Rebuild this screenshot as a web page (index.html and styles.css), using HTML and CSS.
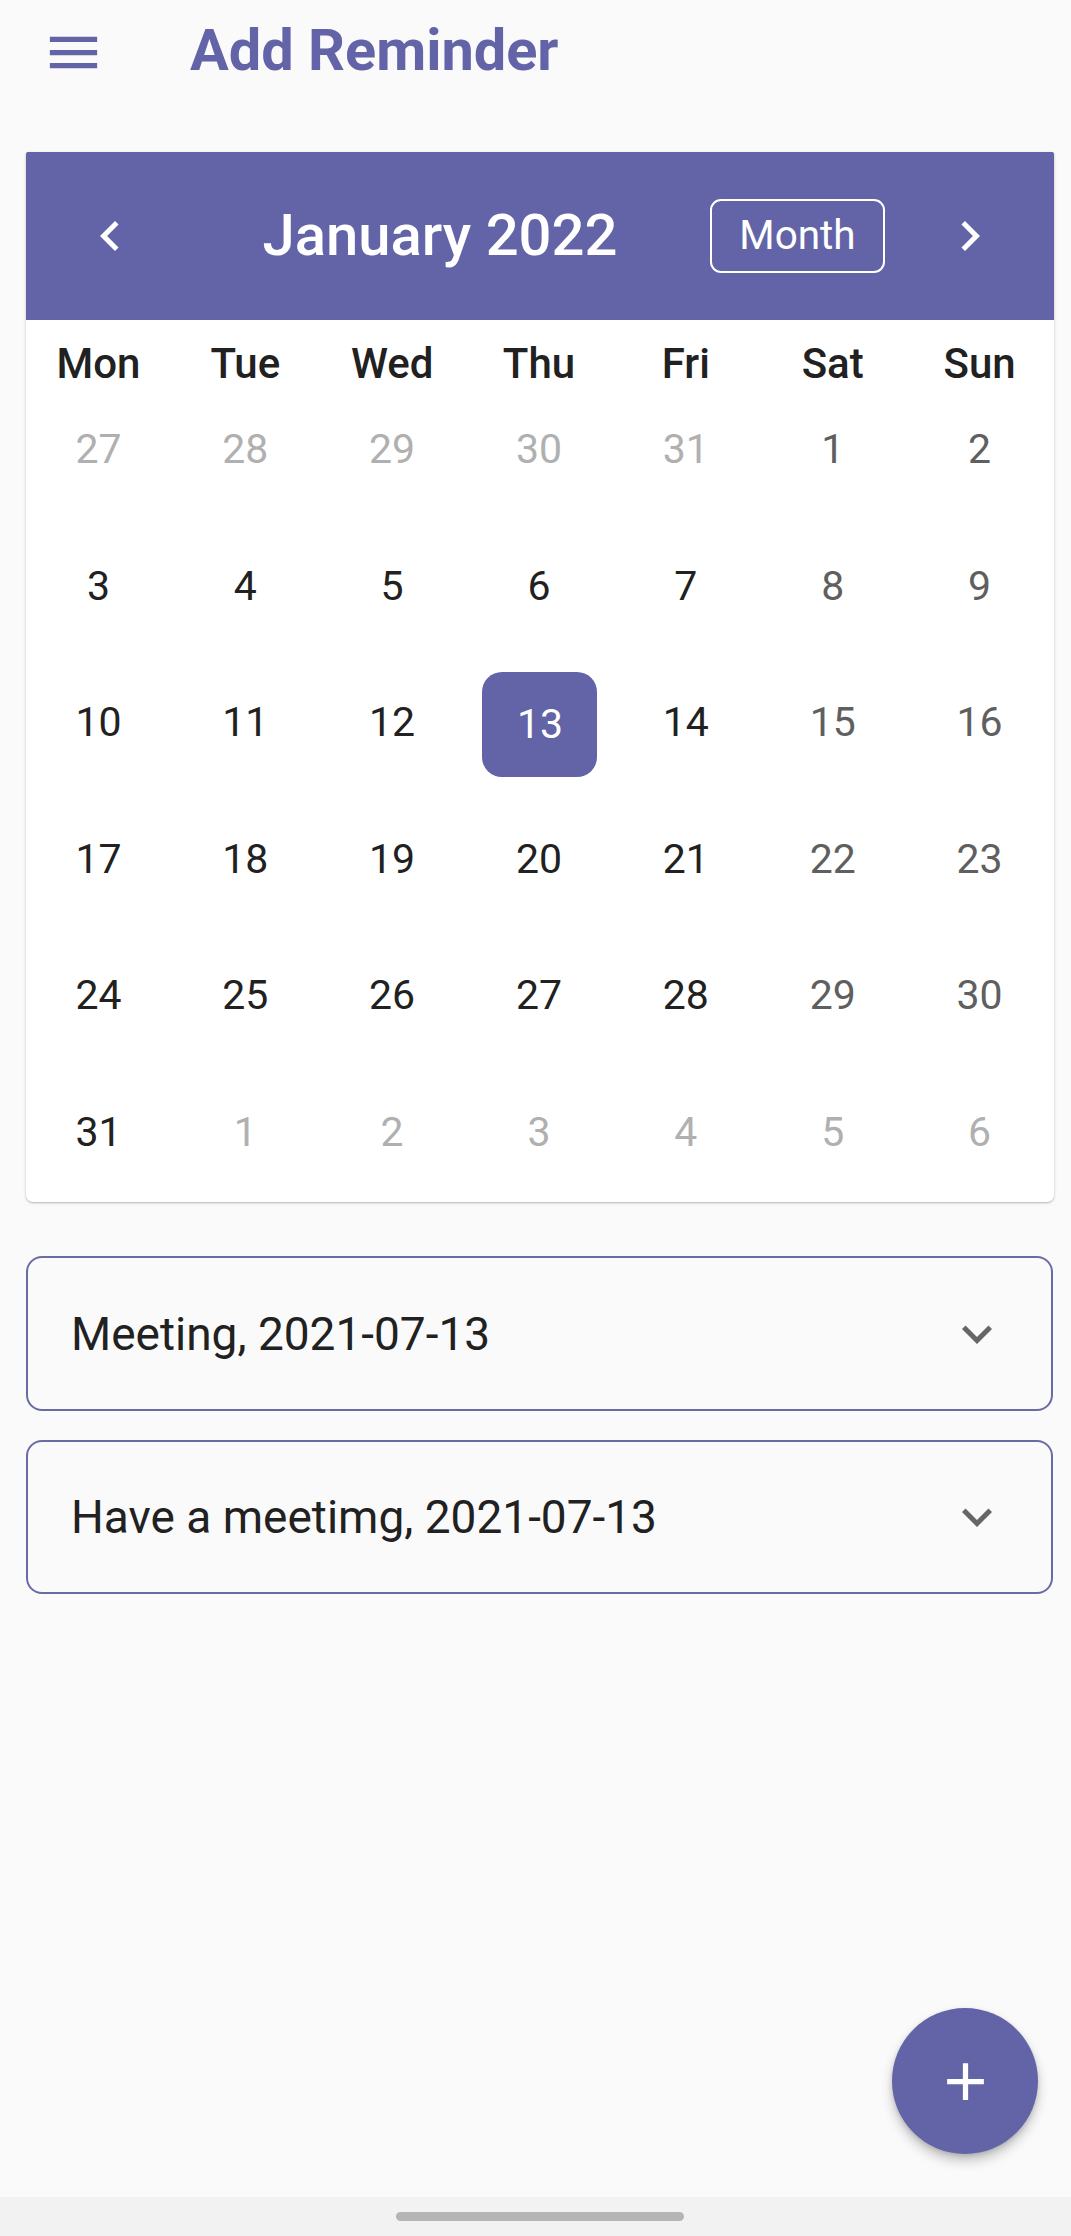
FILE: index.html
```html
<!DOCTYPE html>
<html lang="en">
<head>
<meta charset="utf-8">
<title>Add Reminder</title>
<link rel="stylesheet" href="styles.css">
</head>
<body>
<div class="screen">
  <header class="appbar">
    <svg class="menu-icon" viewBox="0 0 24 24" width="63" height="63"><path d="M3 18h18v-2H3v2zm0-5h18v-2H3v2zm0-7v2h18V6H3z" fill="#6264A7"/></svg>
    <h1 class="appbar-title">Add Reminder</h1>
  </header>

  <main class="content">
    <section class="calendar">
      <div class="cal-header">
        <svg class="nav-icon" viewBox="0 0 24 24" width="60" height="60"><path d="M15.41 7.41L14 6l-6 6 6 6 1.41-1.41L10.83 12z" fill="#fff"/></svg>
        <div class="cal-title">January 2022</div>
        <div class="month-btn">Month</div>
        <svg class="nav-icon nav-right" viewBox="0 0 24 24" width="60" height="60"><path d="M10 6L8.59 7.41 13.17 12l-4.58 4.59L10 18l6-6z" fill="#fff"/></svg>
      </div>
      <div class="weekdays">
        <div>Mon</div><div>Tue</div><div>Wed</div><div>Thu</div><div>Fri</div><div>Sat</div><div>Sun</div>
      </div>
      <div class="days">
        <div class="day out">27</div><div class="day out">28</div><div class="day out">29</div><div class="day out">30</div><div class="day out">31</div><div class="day wk">1</div><div class="day wk">2</div>
        <div class="day">3</div><div class="day">4</div><div class="day">5</div><div class="day">6</div><div class="day">7</div><div class="day wk">8</div><div class="day wk">9</div>
        <div class="day">10</div><div class="day">11</div><div class="day">12</div><div class="day sel"><span>13</span></div><div class="day">14</div><div class="day wk">15</div><div class="day wk">16</div>
        <div class="day">17</div><div class="day">18</div><div class="day">19</div><div class="day">20</div><div class="day">21</div><div class="day wk">22</div><div class="day wk">23</div>
        <div class="day">24</div><div class="day">25</div><div class="day">26</div><div class="day">27</div><div class="day">28</div><div class="day wk">29</div><div class="day wk">30</div>
        <div class="day">31</div><div class="day out">1</div><div class="day out">2</div><div class="day out">3</div><div class="day out">4</div><div class="day out">5</div><div class="day out">6</div>
      </div>
    </section>

    <div class="tile tile-first">
      <span class="tile-text">Meeting, 2021-07-13</span>
      <svg class="expand-icon" viewBox="0 0 24 24" width="60" height="60"><path d="M16.59 8.59L12 13.17 7.41 8.59 6 10l6 6 6-6z" fill="#666"/></svg>
    </div>
    <div class="tile tile-second">
      <span class="tile-text">Have a meetimg, 2021-07-13</span>
      <svg class="expand-icon" viewBox="0 0 24 24" width="60" height="60"><path d="M16.59 8.59L12 13.17 7.41 8.59 6 10l6 6 6-6z" fill="#666"/></svg>
    </div>
  </main>

  <button class="fab" aria-label="Add">
    <svg viewBox="0 0 24 24" width="63" height="63"><path d="M19 13h-6v6h-2v-6H5v-2h6V5h2v6h6v2z" fill="#fff"/></svg>
  </button>

  <div class="sysnav"><div class="handle"></div></div>
</div>
</body>
</html>
```

FILE: styles.css
```css
html, body {
  margin: 0;
  padding: 0;
}
body {
  background: #fafafa;
  font-family: Roboto, "Noto Sans", "Liberation Sans", sans-serif;
  color: #212121;
}
.screen {
  position: relative;
  width: 1071px;
  height: 2236px;
  display: flex;
  flex-direction: column;
  overflow: hidden;
}
.appbar {
  height: 104px;
  display: flex;
  align-items: center;
  padding-left: 42px;
  flex-shrink: 0;
}
.menu-icon {
  display: block;
  flex-shrink: 0;
}
.appbar-title {
  margin: 0 0 3px 85px;
  font-size: 57.7px;
  font-weight: 700;
  color: #6264A7;
  line-height: 1;
}
.content {
  flex: 1;
  padding: 48px 17px 0 26px;
}
.calendar {
  background: #fff;
  border-radius: 2px 2px 7px 7px;
  box-shadow: 0 1px 3px rgba(0,0,0,0.22), 0 1px 1px rgba(0,0,0,0.08);
  overflow: hidden;
  padding-bottom: 2px;
}
.cal-header {
  height: 168px;
  background: #6264A7;
  display: flex;
  align-items: center;
  padding: 0 54px;
  color: #fff;
}
.nav-icon {
  display: block;
  flex-shrink: 0;
}
.cal-title {
  flex: 1;
  text-align: center;
  font-size: 58px;
  font-weight: 500;
  margin: 0 0 0 30px;
  line-height: 1;
  padding-bottom: 3px;
}
.month-btn {
  width: 175px;
  height: 74px;
  box-sizing: border-box;
  border: 2px solid #fff;
  border-radius: 11px;
  display: flex;
  align-items: center;
  justify-content: center;
  font-size: 40.5px;
  font-weight: 400;
  margin-right: 55px;
  padding-bottom: 2px;
}
.weekdays {
  display: grid;
  grid-template-columns: repeat(7, 1fr);
  height: 61px;
  box-sizing: border-box;
  padding-top: 23px;
  font-size: 42px;
  font-weight: 500;
  line-height: 42px;
  text-align: center;
  color: #212121;
}
.weekdays div {
  padding-right: 2px;
}
.days {
  display: grid;
  grid-template-columns: repeat(7, 1fr);
  grid-auto-rows: 136.5px;
}
.day {
  display: flex;
  align-items: center;
  justify-content: center;
  font-size: 41px;
  color: #212121;
  padding-right: 2px;
}
.day.wk {
  color: #5f5f5f;
}
.day.out {
  color: #b0b0b0;
}
.day.sel {
  padding-right: 0;
}
.day.sel span {
  width: 115px;
  height: 105px;
  margin-top: 4px;
  border-radius: 20px;
  background: #6264A7;
  color: #fff;
  display: flex;
  align-items: center;
  justify-content: center;
}
.tile {
  height: 155px;
  box-sizing: border-box;
  border: 2px solid #6a6ba3;
  border-radius: 16px;
  display: flex;
  align-items: center;
  padding: 0 44px 0 43px;
  margin-right: 1px;
}
.tile-first {
  margin-top: 54px;
}
.tile-second {
  margin-top: 29px;
  height: 154px;
}
.tile-text {
  flex: 1;
  font-size: 46px;
  color: #212121;
}
.expand-icon {
  display: block;
  flex-shrink: 0;
}
.fab {
  position: absolute;
  right: 33px;
  bottom: 82px;
  width: 146px;
  height: 146px;
  border-radius: 50%;
  border: none;
  padding: 0;
  background: #6264A7;
  box-shadow: 0 7px 12px rgba(0,0,0,0.22), 0 2px 4px rgba(0,0,0,0.12);
  display: flex;
  align-items: center;
  justify-content: center;
}
.fab svg {
  display: block;
}
.sysnav {
  height: 39px;
  background: #f2f2f2;
  display: flex;
  align-items: center;
  justify-content: center;
  flex-shrink: 0;
}
.handle {
  width: 288px;
  height: 9px;
  border-radius: 5px;
  background: #b5b5b5;
  margin-left: 9px;
}
```
